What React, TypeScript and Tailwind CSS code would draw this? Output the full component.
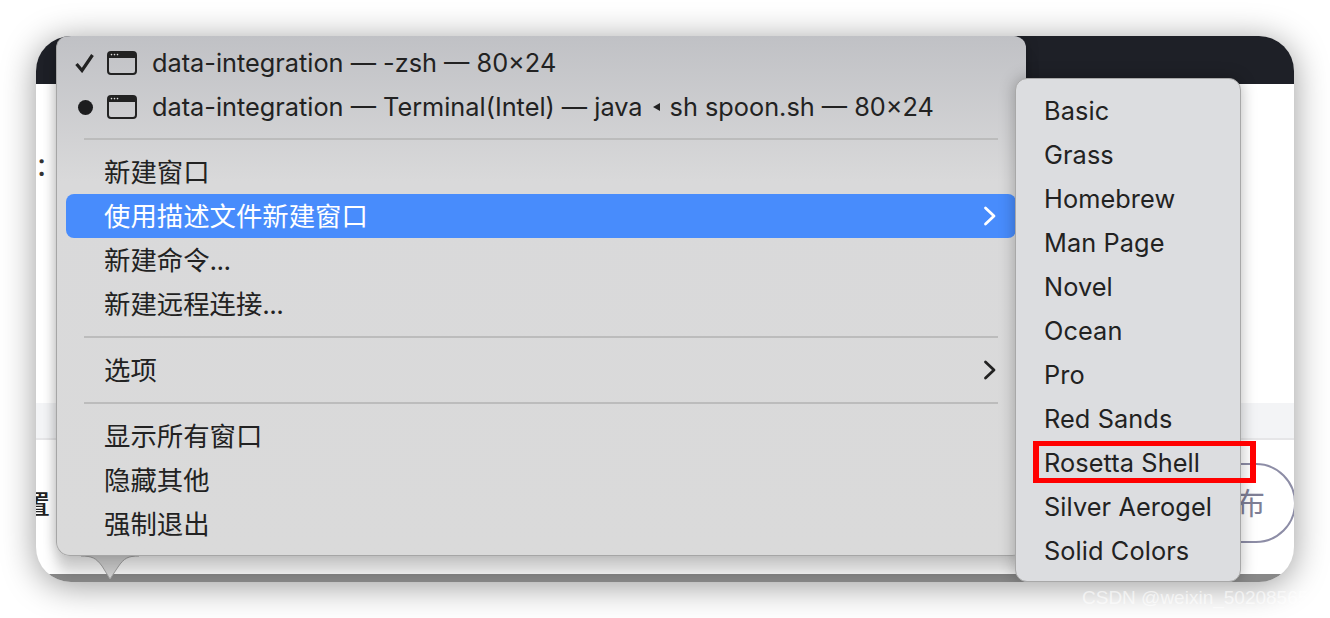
const FONT = "font-['Inter','Noto_Sans_CJK_SC',sans-serif]";

function WindowIcon() {
  return (
    <svg width="30" height="24" viewBox="0 0 30 24" className="shrink-0">
      <rect x="1" y="1" width="28" height="22" rx="3" fill="none" stroke="#222" strokeWidth="2" />
      <rect x="1" y="1" width="28" height="6" fill="#222" />
      <circle cx="4.5" cy="3.6" r="0.8" fill="#ddd" />
      <circle cx="7.5" cy="3.6" r="0.8" fill="#ddd" />
      <circle cx="10.5" cy="3.6" r="0.8" fill="#ddd" />
    </svg>
  );
}

function Chevron({ color }: { color: string }) {
  return (
    <svg width="14" height="20" viewBox="0 0 14 20" className="shrink-0">
      <path d="M2.5 2 L11 10 L2.5 18" fill="none" stroke={color} strokeWidth="2.8" strokeLinecap="round" strokeLinejoin="round" />
    </svg>
  );
}

function WindowRow({ mark, children }: { mark: "check" | "dot"; children: React.ReactNode }) {
  return (
    <div className="flex h-[44px] items-center whitespace-nowrap pl-[17px] text-[25.3px] text-[#222]">
      <span className="flex w-[22px] justify-center">
        {mark === "check" ? (
          <svg width="20" height="20" viewBox="0 0 20 20">
            <path d="M1.5 11 L7 17.5 L17.5 2" fill="none" stroke="#222" strokeWidth="3.2" />
          </svg>
        ) : (
          <span className="h-[15px] w-[15px] rounded-full bg-[#1d1d1f]" />
        )}
      </span>
      <span className="ml-[11px] mr-[15px] flex">
        <WindowIcon />
      </span>
      <span className="flex items-center">{children}</span>
    </div>
  );
}

function Item({ children }: { children: React.ReactNode }) {
  return (
    <div className="flex h-[44px] items-center pl-[47px] pt-[2px] text-[26.4px] text-[#222]">{children}</div>
  );
}

function Dots() {
  return <span className="tracking-[-0.6px]">...</span>;
}

function Separator() {
  return <div className="my-[10px] ml-[27px] mr-[28px] h-[2px] bg-[#bcbcbc]" />;
}

export default function App() {
  return (
    <div className={`relative h-[618px] w-[1330px] overflow-hidden bg-white ${FONT}`}>
      <div className="absolute left-[36px] top-[36px] h-[546px] w-[1258px] overflow-hidden rounded-[35px] bg-white shadow-[0_4px_34px_rgba(0,0,0,0.4)]">
        <div className="flex h-full flex-col">
          <div className="h-[48px] shrink-0 bg-[#1e2027]" />
          <div className="h-[319px] shrink-0 bg-white pl-[1px] pt-[59px] text-[32px] leading-[44px] text-[#333]">:</div>
          <div className="h-[37px] shrink-0 border-b-2 border-[#e6e6e8] bg-[#f3f4f6]" />
          <div className="relative flex min-h-0 flex-1 items-start justify-between">
            <span className="-ml-[12px] mt-[43px] text-[26px] font-medium leading-[44px] text-[#222]">置</span>
            <div className="-mr-[2px] mt-[23px] flex h-[80px] w-[120px] items-center justify-end rounded-[40px] border-2 border-[#8d8da6] bg-white pr-[29px] text-[30px] text-[#7f7f96]">
              布
            </div>
          </div>
          <div className="h-[8px] shrink-0 bg-[#888888]" />
        </div>

        <svg width="60" height="30" viewBox="0 0 60 30" className="absolute left-[44px] top-[518px] z-10">
          <path d="M1 2 C12 2 16 4 22 12 L30 25 L38 13 C44 4 48 2 59 2" fill="#dadada" stroke="#a8a8a8" strokeWidth="1" />
          <rect x="3" y="0" width="54" height="2" fill="#dadada" />
        </svg>

        <div className="absolute left-[20px] top-0 z-10 h-[520px] w-[970px] rounded-b-[14px] rounded-t-[12px] border-b border-l border-[#a6a6a6] bg-[linear-gradient(180deg,#c0c1c5_0%,#d9d9da_28%,#dadada_100%)] shadow-[0_18px_14px_rgba(0,0,0,0.17),0_0_14px_rgba(0,0,0,0.2)]">
          <div className="pt-[5px]">
            <WindowRow mark="check">data-integration — -zsh — 80×24</WindowRow>
            <WindowRow mark="dot">
              data-integration — Terminal(Intel) — java
              <span className="mx-[10px] inline-block h-0 w-0 border-y-[4px] border-r-[7px] border-y-transparent border-r-[#222]" />
              sh spoon.sh — 80×24
            </WindowRow>
          </div>
          <div className="-mt-[1px] flex flex-col">
            <Separator />
          </div>
          <div className="flex flex-col">
            <Item>新建窗口</Item>
            <div className="ml-[9px] mr-[10px] flex h-[44px] items-center justify-between rounded-[8px] bg-[#488cfc] pl-[38px] pr-[19px] text-[26.4px] text-white">
              <span className="pt-[2px]">使用描述文件新建窗口</span>
              <Chevron color="#ffffff" />
            </div>
            <Item>
              新建命令
              <Dots />
            </Item>
            <Item>
              新建远程连接
              <Dots />
            </Item>
          </div>
          <Separator />
          <div className="flex h-[44px] items-center justify-between pl-[47px] pr-[29px] text-[26.4px] text-[#222]">
            <span className="pt-[2px]">选项</span>
            <Chevron color="#222222" />
          </div>
          <Separator />
          <Item>显示所有窗口</Item>
          <Item>隐藏其他</Item>
          <Item>强制退出</Item>
        </div>

        <div className="absolute left-[979px] top-[42px] z-20 h-[504px] w-[226px] rounded-[12px] border border-[#a8a8a8] bg-[#dcdde0] pt-[10px] text-[25.3px] tracking-[0.1px] text-[#222] shadow-[0_0_16px_rgba(0,0,0,0.28)]">
          {["Basic", "Grass", "Homebrew", "Man Page", "Novel", "Ocean", "Pro", "Red Sands", "Rosetta Shell", "Silver Aerogel", "Solid Colors"].map((name) => (
            <div key={name} className="flex h-[44px] items-center pl-[28px]">
              {name}
            </div>
          ))}
        </div>

        <div className="absolute left-[997px] top-[405px] z-30 h-[42px] w-[223px] border-x-[6px] border-y-[5px] border-[#ff0000]" />
      </div>
      <div className="absolute left-[1082px] top-[587px] whitespace-nowrap font-['Liberation_Sans',sans-serif] text-[19px] leading-[22px] text-white/60">
        CSDN @weixin_50208565
      </div>
    </div>
  );
}
